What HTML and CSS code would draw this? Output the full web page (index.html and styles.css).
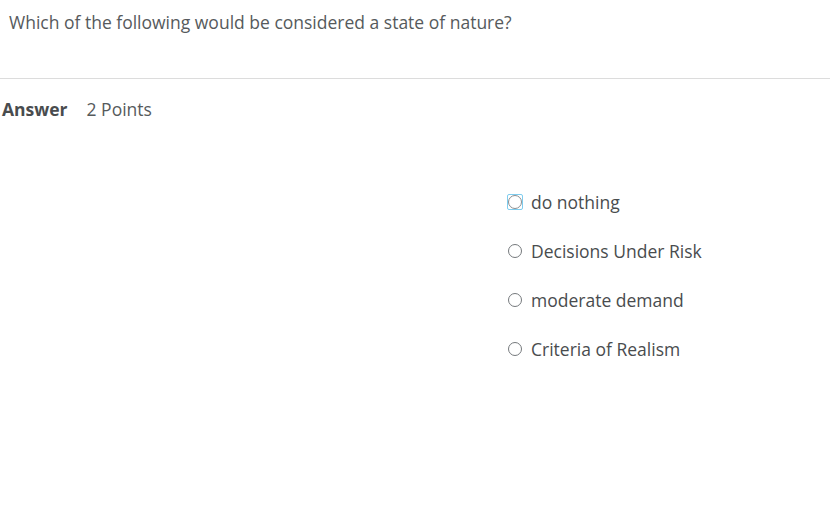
FILE: index.html
```html
<!DOCTYPE html>
<html>
<head>
<meta charset="utf-8">
<link rel="stylesheet" href="styles.css">
</head>
<body>
<div class="question">Which of the following would be considered a state of nature?</div>
<div class="rule"></div>
<div class="answer-head"><span class="answer-label">Answer</span><span class="points">2 Points</span></div>
<div class="options">
  <label class="option"><span class="radio focused"></span><span>do nothing</span></label>
  <label class="option"><span class="radio"></span><span>Decisions Under Risk</span></label>
  <label class="option"><span class="radio"></span><span>moderate demand</span></label>
  <label class="option"><span class="radio"></span><span>Criteria of Realism</span></label>
</div>
</body>
</html>
```
FILE: styles.css
```css
html, body {
  margin: 0;
  padding: 0;
  background: #fff;
}
body {
  font-family: "Open Sans", "Liberation Sans", sans-serif;
  font-size: 17.5px;
  color: #494c4e;
  width: 832px;
  height: 513px;
  overflow: hidden;
}
.question {
  padding: 10px 0 0 9px;
  line-height: 24px;
  height: 44px;
  color: #565a5c;
}
.rule {
  margin-top: 24px;
  width: 830px;
  height: 1px;
  background: #dcdcdc;
}
.answer-head {
  display: flex;
  align-items: baseline;
  gap: 19px;
  padding: 18px 0 0 2px;
  line-height: 24px;
}
.answer-label {
  font-weight: 700;
  color: #494c4e;
}
.points {
  color: #565a5c;
}
.options {
  display: flex;
  flex-direction: column;
  gap: 25px;
  margin: 69px 0 0 508px;
}
.option {
  display: flex;
  align-items: center;
  gap: 9px;
  line-height: 24px;
  color: #494c4e;
}
.radio {
  box-sizing: border-box;
  width: 14px;
  height: 14px;
  border: 1.5px solid #75797c;
  border-radius: 50%;
  position: relative;
}
.radio.focused {
  border-color: #8a8d90;
}
.radio.focused::after {
  content: "";
  position: absolute;
  left: -2px;
  top: -2px;
  width: 14px;
  height: 14px;
  border: 1px solid #7fcdef;
  border-radius: 2px;
}
```
